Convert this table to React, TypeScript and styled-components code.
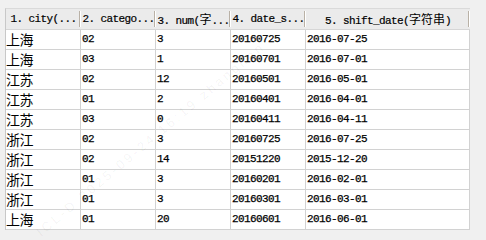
import React from 'react';
import styled, { createGlobalStyle } from 'styled-components';

const GlobalStyle = createGlobalStyle`
  html, body {
    margin: 0;
    padding: 0;
    background: #f0f0f0;
  }
`;

const Page = styled.div`
  position: relative;
  width: 486px;
  height: 240px;
  overflow: hidden;
  padding: 8px 0 0 5px;
  box-sizing: border-box;
  background: #f0f0f0;
`;

const Grid = styled.div`
  display: grid;
  grid-template-columns: 75px 75px 75px 75px 164px;
  width: 465px;
  border-left: 1px solid #c8c8c8;
  border-top: 1px solid #dadada;
  box-sizing: border-box;
  background: #fff;
`;

const HeadCell = styled.div`
  position: relative;
  height: 20px;
  line-height: 20px;
  background: #ebebeb;
  border-bottom: 1px solid #d6d6d6;
  text-align: center;
  white-space: nowrap;
  overflow: hidden;
  font-family: "Liberation Mono", "Noto Sans CJK SC", monospace;
  font-size: 11px;
  letter-spacing: -0.6px;
  color: #000;
  -webkit-text-stroke: 0.2px #000;

  &::after {
    content: '';
    position: absolute;
    right: 0;
    top: 2px;
    bottom: 2px;
    width: 0;
    border-left: 1px solid #b9b1a6;
    border-right: 1px solid #fff;
  }
`;

const HeadCjk = styled.span`
  font-family: "Noto Sans CJK SC", sans-serif;
  font-size: 12px;
  letter-spacing: 0;
  -webkit-text-stroke: 0;
`;

const Cell = styled.div<{ $cjk?: boolean }>`
  height: 19px;
  line-height: 19px;
  border-right: 1px solid #d2d2d2;
  border-bottom: 1px solid #d2d2d2;
  padding-left: ${p => (p.$cjk ? '0' : '1px')};
  white-space: nowrap;
  overflow: hidden;
  color: #000;
  font-family: ${p => (p.$cjk ? '"Noto Sans CJK SC", sans-serif' : '"Liberation Mono", monospace')};
  font-size: ${p => (p.$cjk ? '14px' : '11px')};
  letter-spacing: ${p => (p.$cjk ? '-0.5px' : '-0.6px')};
  -webkit-text-stroke: ${p => (p.$cjk ? '0' : '0.25px #000')};
`;

const Watermark = styled.div`
  position: absolute;
  left: 38px;
  top: 226px;
  transform: rotate(-40deg);
  transform-origin: left center;
  white-space: nowrap;
  font-family: "Liberation Sans", sans-serif;
  font-size: 13px;
  letter-spacing: 3px;
  color: rgba(0, 0, 0, 0.05);
  pointer-events: none;
`;

type Row = [string, string, string, string, string];

const rows: Row[] = [
  ['上海', '02', '3', '20160725', '2016-07-25'],
  ['上海', '03', '1', '20160701', '2016-07-01'],
  ['江苏', '02', '12', '20160501', '2016-05-01'],
  ['江苏', '01', '2', '20160401', '2016-04-01'],
  ['江苏', '03', '0', '20160411', '2016-04-11'],
  ['浙江', '02', '3', '20160725', '2016-07-25'],
  ['浙江', '02', '14', '20151220', '2015-12-20'],
  ['浙江', '01', '3', '20160201', '2016-02-01'],
  ['浙江', '01', '3', '20160301', '2016-03-01'],
  ['上海', '01', '20', '20160601', '2016-06-01'],
];

const App: React.FC = () => {
  return (
    <Page>
      <GlobalStyle />
      <Grid>
        <HeadCell>1. city(...</HeadCell>
        <HeadCell>2. catego...</HeadCell>
        <HeadCell>
          3. num(<HeadCjk>字</HeadCjk>...
        </HeadCell>
        <HeadCell>4. date_s...</HeadCell>
        <HeadCell>
          5. shift_date(<HeadCjk>字符串</HeadCjk>)
        </HeadCell>
        {rows.map((r, i) => (
          <React.Fragment key={i}>
            <Cell $cjk>{r[0]}</Cell>
            <Cell>{r[1]}</Cell>
            <Cell>{r[2]}</Cell>
            <Cell>{r[3]}</Cell>
            <Cell>{r[4]}</Cell>
          </React.Fragment>
        ))}
      </Grid>
      <Watermark>ICL-D 2025-09-24 16:19 zhangnan</Watermark>
    </Page>
  );
};

export default App;
